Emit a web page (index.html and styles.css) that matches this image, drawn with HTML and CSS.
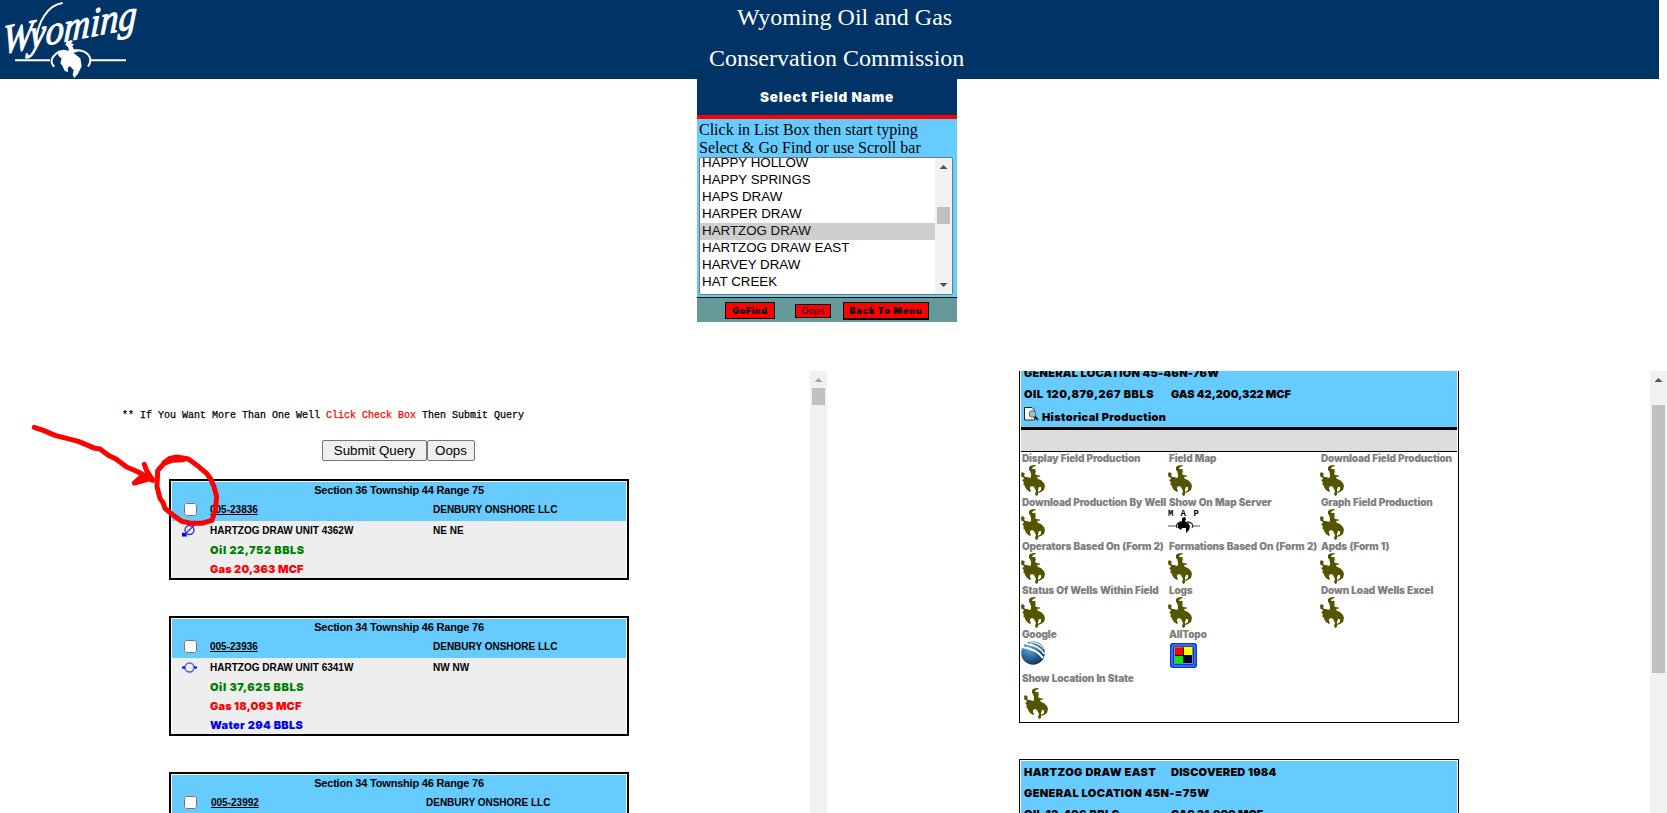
FILE: index.html
```html
<!DOCTYPE html>
<html lang="en">
<head>
<meta charset="utf-8">
<title>Wyoming Oil and Gas Conservation Commission</title>
<link rel="stylesheet" href="styles.css">
</head>
<body>
<svg class="defs" width="0" height="0">
  <symbol id="horse" viewBox="0 0 24 31">
    <path fill="#555500" d="M8 5L8 2L10 .5L14 0L15 1L12 2L11 4L15 4L14 5L15 7L14 8L15 10L19 10.500L19 11.500L16 12L17 14L20 15L23 18L24 21L23 25L20 27L17 28L17 27L20 25L20 22L18 22L17 25L17 30L15 31L14 29L15 26L13 22L11 21L9 22L9 24L10 26L9 27L6 25L4 22L4 21L2 19L3 18L2 16L1 15L3 14L2 12L.5 12L0 9L1 7L3 8L4 9L3 10L4 12L6 12L9 13L10 12L10 9L9 6Z"/>
  </symbol>
</svg>

<header class="banner">
  <svg class="logo" width="160" height="79" viewBox="0 0 480 237">
    <text class="logo-word" transform="translate(6 162) rotate(-11) skewX(-14)" textLength="410" lengthAdjust="spacingAndGlyphs">Wyoming</text>
    <path class="logo-line" d="M108 128C112 65 143 15 188 9M45 181H150M271 181H378M163 200C148 187 154 169 177 155M222 151C263 148 282 174 264 200"/>
    <path fill="#fff" d="M196 134L199 126L213 120L219 124L213 130L222 133L217 139L222 149L235 155L220 158L241 175L245 199L234 221L223 234L218 225L221 210L209 198L203 205L204 217L194 212L187 197L181 190L185 176L174 166L176 152L190 149L207 152L204 141Z"/>
  </svg>
  <h1 class="agency"><span class="agency-a">Wyoming Oil and Gas</span><span class="agency-b">Conservation Commission</span></h1>
</header>

<section class="picker">
  <h2 class="picker-title">Select Field Name</h2>
  <div class="picker-body">
    <p class="picker-help">Click in List Box then start typing<br>Select &amp; Go Find or use Scroll bar</p>
    <div class="listbox">
      <ul class="options">
        <li>HAPPY HOLLOW</li><li>HAPPY SPRINGS</li><li>HAPS DRAW</li><li>HARPER DRAW</li><li class="selected">HARTZOG DRAW</li><li>HARTZOG DRAW EAST</li><li>HARVEY DRAW</li><li>HAT CREEK</li><li>HATCH</li>
      </ul>
      <div class="scroll scroll-list"><i class="up"></i><b class="thumb"></b><i class="down"></i></div>
    </div>
  </div>
  <div class="picker-actions">
    <button class="red go">GoFind</button><button class="red oops">Oops</button><button class="red back">Back To Menu</button>
  </div>
</section>

<main class="frames">
  <section class="frame wells">
    <div class="wells-content">
      <p class="hint">** If You Want More Than One Well <span>Click Check Box</span> Then Submit Query</p>
      <div class="submit"><button class="plain submit-btn">Submit Query</button><button class="plain reset-btn">Oops</button></div>

      <article class="well">
        <div class="well-head">
          <h3>Section 36 Township 44 Range 75</h3>
          <div class="row api"><input type="checkbox"><a>005-23836</a><span>DENBURY ONSHORE LLC</span></div>
        </div>
        <div class="well-body">
          <div class="row"><svg class="mark" width="15" height="14" viewBox="0 0 15 14"><circle cx="7.5" cy="6" r="4.5" fill="none" stroke="#33f" stroke-width="1.4"/><path d="M13.5 0L2 11" stroke="#33f" stroke-width="1.4"/><path d="M0 8.5L4 9.5L5 12.5H0Z" fill="#00f"/></svg><span>HARTZOG DRAW UNIT 4362W</span><span>NE NE</span></div>
          <p class="vol oil">Oil 22,752 BBLS</p>
          <p class="vol gas">Gas 20,363 MCF</p>
        </div>
      </article>

      <article class="well">
        <div class="well-head">
          <h3>Section 34 Township 46 Range 76</h3>
          <div class="row api"><input type="checkbox"><a>005-23936</a><span>DENBURY ONSHORE LLC</span></div>
        </div>
        <div class="well-body">
          <div class="row"><svg class="mark" width="15" height="14" viewBox="0 0 15 14"><circle cx="7.5" cy="6.5" r="4.5" fill="none" stroke="#55f" stroke-width="1.4"/><path d="M0 6.5H3M12 6.5H15" stroke="#00f" stroke-width="1.8"/></svg><span>HARTZOG DRAW UNIT 6341W</span><span>NW NW</span></div>
          <p class="vol oil">Oil 37,625 BBLS</p>
          <p class="vol gas">Gas 18,093 MCF</p>
          <p class="vol water">Water 294 BBLS</p>
        </div>
      </article>

      <article class="well shifted">
        <div class="well-head">
          <h3>Section 34 Township 46 Range 76</h3>
          <div class="row api"><input type="checkbox"><a>005-23992</a><span>DENBURY ONSHORE LLC</span></div>
        </div>
        <div class="well-body"></div>
      </article>
    </div>
    <div class="scroll scroll-wells"><i class="up"></i><b class="thumb"></b></div>
  </section>

  <section class="frame fields">
    <div class="fields-content">
      <article class="field">
        <div class="field-head first">
          <p class="ls2">GENERAL LOCATION 45-46N-76W</p>
          <p class="pair"><span class="ls5">OIL 120,879,267 BBLS</span><span>GAS 42,200,322 MCF</span></p>
          <p class="history ls3"><svg width="15" height="14" viewBox="0 0 15 14"><path d="M.5 .5H8L10.5 3V13H.5Z" fill="#fff" stroke="#222"/><circle cx="8.5" cy="7" r="3.2" fill="#8cc8cc" stroke="#777" stroke-width="1.2"/><path d="M10.8 9.5L14 13" stroke="#222" stroke-width="2"/></svg><span>Historical Production</span></p>
        </div>
        <div class="field-bar"></div>
        <div class="tools">
          <div><a>Display Field Production</a><svg class="ico"><use href="#horse"/></svg></div>
          <div><a>Field Map</a><svg class="ico"><use href="#horse"/></svg></div>
          <div><a>Download Field Production</a><svg class="ico"><use href="#horse"/></svg></div>
          <div><a>Download Production By Well</a><svg class="ico"><use href="#horse"/></svg></div>
          <div><a>Show On Map Server</a><svg class="mapico" width="32" height="31" viewBox="0 0 32 31"><text x="0" y="6.5" class="map-word">M</text><text x="12.5" y="6.5" class="map-word">A</text><text x="25.5" y="6.5" class="map-word">P</text><path d="M0 17H8M25 17H32" stroke="#555"/><path d="M9 19C7 15 12 12 14 13M19 13C24 13 26 16 24 19" fill="none" stroke="#333" stroke-width="1.3"/><path d="M14 9L17 8L18 10L17 12L20 14L22 17L21 21L18 24L18 19L14 19L13 21L10 19L10 14L14 13Z" fill="#000"/></svg></div>
          <div><a>Graph Field Production</a><svg class="ico"><use href="#horse"/></svg></div>
          <div><a>Operators Based On (Form 2)</a><svg class="ico"><use href="#horse"/></svg></div>
          <div><a>Formations Based On (Form 2)</a><svg class="ico"><use href="#horse"/></svg></div>
          <div><a>Apds (Form 1)</a><svg class="ico"><use href="#horse"/></svg></div>
          <div><a>Status Of Wells Within Field</a><svg class="ico"><use href="#horse"/></svg></div>
          <div><a>Logs</a><svg class="ico"><use href="#horse"/></svg></div>
          <div><a>Down Load Wells Excel</a><svg class="ico"><use href="#horse"/></svg></div>
          <div><a>Google</a><svg class="globe" width="24" height="24" viewBox="0 0 24 24"><defs><radialGradient id="g" cx=".35" cy=".3" r=".8"><stop offset="0" stop-color="#6aa9d8"/><stop offset=".6" stop-color="#235d94"/><stop offset="1" stop-color="#0b2748"/></radialGradient></defs><circle cx="12" cy="12" r="11.8" fill="url(#g)"/><path d="M1 6C8 7 17 10 22 17" fill="none" stroke="#fff" stroke-width="2.200"/><path d="M5 3C12 3 20 7 23.300 13" fill="none" stroke="#fff" stroke-width="1.8"/><path d="M9 1C15 1 20 4 22.500 8" fill="none" stroke="#dcebf7" stroke-width="1.3"/></svg></div>
          <div><a>AllTopo</a><svg class="topo" width="27" height="25" viewBox="0 0 27 25"><rect width="27" height="25" rx="3" fill="#0a37c4"/><rect x="2" y="2" width="23" height="21" rx="3" fill="none" stroke="#2e6cff" stroke-width="2"/><rect x="4" y="3" width="19" height="18" rx="2" fill="#112"/><path d="M5 4H13V12H5Z" fill="#f00"/><path d="M14 4H22V12H14Z" fill="#ff0"/><path d="M5 13H13V20H5Z" fill="#0e0"/><path d="M14 13H22V20H14Z" fill="#003"/><path d="M4.500 4V20.500H22.500V4Z" fill="none" stroke="#cde" stroke-width=".6"/></svg></div>
          <div></div>
          <div><a>Show Location In State</a><svg class="ico low"><use href="#horse"/></svg></div>
        </div>
      </article>
      <article class="field second">
        <div class="field-head">
          <p class="pair"><span class="ls4">HARTZOG DRAW EAST</span><span class="ls2">DISCOVERED 1984</span></p>
          <p class="ls3">GENERAL LOCATION 45N-=75W</p>
          <p class="pair"><span class="ls4">OIL 13,496 BBLS</span><span>GAS 31,909 MCF</span></p>
        </div>
      </article>
    </div>
    <div class="scroll scroll-fields"><i class="up"></i><b class="thumb"></b></div>
  </section>
</main>

<svg class="annotation" width="330" height="190" viewBox="0 0 990 570">
  <path d="M103 82L130 91L165 106L235 124L285 145L300 147L325 166L348 177L380 201L415 216L458 241M433 193L440 212L458 240L425 230L403 249L440 239"/>
  <path d="M550 179L515 181L492 190L473 212L471 260L480 295L489 308L495 325L520 346L545 364L575 370L605 370L636 361L646 330L650 290L642 260L632 237L620 220L595 199L565 177L530 171L510 175L492 188"/>
</svg>
</body>
</html>
```
FILE: styles.css
```css
* { box-sizing: border-box; }
body {
  margin: 0;
  width: 1667px;
  height: 813px;
  overflow: hidden;
  position: relative;
  background: #fff;
  color: #000;
  font-family: "Liberation Sans", sans-serif;
}
h1, h2, h3, p, ul { margin: 0; padding: 0; font-weight: inherit; }
svg { display: block; }
.defs { position: absolute; }

.banner { display: flex; width: 1659px; height: 79px; background: #036; }
.logo { flex: none; overflow: visible; }
.logo-word { font: italic 400 122px "Liberation Serif", serif; fill: #fff; stroke: #fff; stroke-width: 3; }
.logo-line { fill: none; stroke: #fff; stroke-width: 6; }
.agency {
  display: flex;
  flex-direction: column;
  margin-left: 549px;
  color: #fff;
  font: 24px/41px "Liberation Serif", serif;
  white-space: nowrap;
  margin-top: -3px;
}
.agency-a { margin-left: 28px; }

.picker { width: 260px; margin-left: 697px; }
.picker-title {
  height: 40px;
  border-bottom: 4px solid #f00;
  background: #036;
  color: #fff;
  font: 900 13.5px/37px Inter, sans-serif;
  letter-spacing: .8px;
  text-align: center;
}
.picker-body { height: 179px; padding: 2px 0 0 2px; background: #6cf; border-bottom: 1px solid #000; }
.picker-help { height: 36px; font: 16px/18px "Liberation Serif", serif; white-space: nowrap; }
.listbox {
  display: flex;
  width: 254px;
  height: 138px;
  border: 1px solid #767676;
  border-radius: 2px;
  background: #fff;
  overflow: hidden;
}
.options { flex: 1; margin-top: -3px; list-style: none; font-size: 13.333px; line-height: 15px; }
.options li { height: 17px; padding-left: 2px; }
.options .selected { background: #cecece; color: #101010; }
.picker-actions { display: flex; align-items: flex-start; height: 24px; padding: 4px 0 0 28px; background: #699; }
.red {
  padding: 0;
  border: 1px solid #000;
  background: #f00;
  color: #000;
  font: 900 9px/14px Inter, sans-serif;
  white-space: nowrap;
}
.go { width: 50px; height: 17px; letter-spacing: .5px; }
.oops { width: 36px; height: 14px; margin: 2px 12px 0 20px; font: 9px/11px "DejaVu Sans", sans-serif; }
.back { width: 86px; height: 18px; border-bottom-width: 2px; letter-spacing: .85px; }

.scroll { display: flex; flex-direction: column; align-items: center; flex: none; width: 17px; background: #f1f1f1; }
.thumb { width: 13px; background: #c1c1c1; }
.up, .down { width: 8px; height: 4px; background: #505050; clip-path: polygon(50% 0, 100% 100%, 0 100%); margin-top: 7px; }
.down { clip-path: polygon(0 0, 100% 0, 50% 100%); margin-top: 59px; }
.scroll-list .thumb { height: 17px; margin-top: 38px; }
.scroll-wells .up { background: #a3a3a3; }
.scroll-wells .thumb { height: 17px; margin-top: 6px; }
.scroll-fields .thumb { height: 268px; margin-top: 23px; }

.frames { display: flex; height: 442px; margin-top: 49px; }
.frame { display: flex; height: 442px; overflow: hidden; }
.wells { width: 827px; }
.wells-content { width: 810px; height: 442px; padding: 39px 0 0 169px; overflow: hidden; }
.hint { width: 420px; margin-left: -47px; font: 10px/11px "Liberation Mono", monospace; -webkit-text-stroke: .25px; white-space: pre; }
.hint span { color: #f00; }
.submit { display: flex; margin: 19px 0 18px 153px; }
.plain {
  height: 21px;
  padding: 0;
  border: 1px solid #767676;
  border-radius: 2px;
  background: #efefef;
  color: #000;
  font: 13.333px/17px "Liberation Sans", sans-serif;
}
.submit-btn { width: 105px; }
.reset-btn { width: 48px; }

.well { width: 460px; margin-bottom: 36px; padding: 1px 1px 0; border: 2px solid #000; }
.well-head { height: 39px; background: #6cf; }
.well-head h3 { font: 700 11px/17px "Liberation Sans", sans-serif; letter-spacing: -.2px; text-align: center; }
.row { display: grid; grid-template-columns: 38px 223px 1fr; height: 19px; font: 700 10px/19px "Liberation Sans", sans-serif; white-space: nowrap; }
.row.api { height: 21px; line-height: 21px; }
.row a { text-decoration: underline; text-underline-offset: 1px; }
.shifted .row { grid-template-columns: 39px 215px 1fr; }
.row input { width: 13px; height: 13px; margin: 4px 0 0 12px; }
.mark { margin: 3px 0 0 10px; }
.well-body { background: #eee; }
.shifted .well-body { height: 57px; }
.vol { height: 19px; padding-left: 38px; font: 900 11px/21px Inter, sans-serif; }
.oil { color: #008000; letter-spacing: .55px; }
.gas { color: #f00; letter-spacing: .15px; }
.water { color: #00f; letter-spacing: .35px; }

.fields { width: 840px; }
.fields-content { width: 823px; padding-left: 192px; }
.field { width: 440px; margin-top: -11px; padding: 1px; border: 1px solid #000; }
.field-head { height: 65px; background: #6cf; font: 900 11px/21px Inter, sans-serif; }
.field-head p { height: 21px; padding-left: 3px; white-space: nowrap; }
.first { line-height: 23px; }
.ls2 { letter-spacing: .23px; }
.ls3 { letter-spacing: .35px; }
.ls4 { letter-spacing: .4px; }
.ls5 { letter-spacing: .5px; }
.pair { display: grid; grid-template-columns: 147px 1fr; }
.field-head .history { display: flex; gap: 3px; height: 23px; line-height: 26px; }
.history svg { margin-top: 3px; }
.field-bar { height: 25px; border-top: 3px solid #000; border-bottom: 1px solid #000; background: #dcdcdc; }
.tools { display: grid; grid-template-columns: 147px 152px 1fr; grid-auto-rows: 44px; height: 269px; padding-left: 1px; }
.tools a { display: block; height: 13px; color: #808080; font: 900 10px/13px Inter, sans-serif; letter-spacing: -.17px; word-spacing: .5px; white-space: nowrap; }
.ico { width: 24px; height: 31px; margin-left: -1px; overflow: visible; }
.low { margin: 3px 0 0 2px; }
.globe { margin-left: -1px; }
.topo { margin: 2px 0 0 1px; }
.mapico { margin-left: -1px; }
.map-word { font: 700 9px "Liberation Mono", monospace; }
.second { margin-top: 36px; }
.second .field-head { line-height: 22px; }

.annotation { position: absolute; left: 0; top: 400px; pointer-events: none; }
.annotation path { fill: none; stroke: #f00; stroke-width: 15; stroke-linecap: round; stroke-linejoin: round; }
```
